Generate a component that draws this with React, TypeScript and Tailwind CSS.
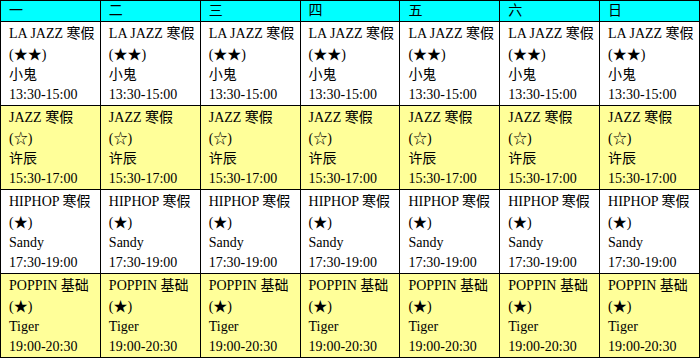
const days = ["一", "二", "三", "四", "五", "六", "日"];

type Lesson = {
  title: string;
  level: string;
  teacher: string;
  time: string;
  bg: string;
};

const lessons: Lesson[] = [
  { title: "LA JAZZ 寒假", level: "(★★)", teacher: "小鬼", time: "13:30-15:00", bg: "bg-white" },
  { title: "JAZZ 寒假", level: "(☆)", teacher: "许辰", time: "15:30-17:00", bg: "bg-[#ffff99]" },
  { title: "HIPHOP 寒假", level: "(★)", teacher: "Sandy", time: "17:30-19:00", bg: "bg-white" },
  { title: "POPPIN 基础", level: "(★)", teacher: "Tiger", time: "19:00-20:30", bg: "bg-[#ffff99]" },
];

export default function App() {
  return (
    <div className="h-[360px] w-[700px] bg-white font-['Liberation_Serif','Noto_Sans_CJK_SC',serif] text-[14px] text-black">
      <table className="w-[700px] table-fixed border-collapse border border-black">
        <thead>
          <tr className="bg-[#00ffff]">
            {days.map((d) => (
              <th
                key={d}
                className="h-[21px] border border-black px-2 py-0 text-left align-middle font-normal leading-[20px]"
              >
                {d}
              </th>
            ))}
          </tr>
        </thead>
        <tbody>
          {lessons.map((l) => (
            <tr key={l.title} className={l.bg}>
              {days.map((d) => (
                <td
                  key={d}
                  className="whitespace-nowrap border border-black pl-2 pr-0 py-0 align-top leading-[20px]"
                >
                  <div className="leading-[23px]">{l.title}</div>
                  <div>{l.level}</div>
                  <div>{l.teacher}</div>
                  <div>{l.time}</div>
                </td>
              ))}
            </tr>
          ))}
        </tbody>
      </table>
    </div>
  );
}
